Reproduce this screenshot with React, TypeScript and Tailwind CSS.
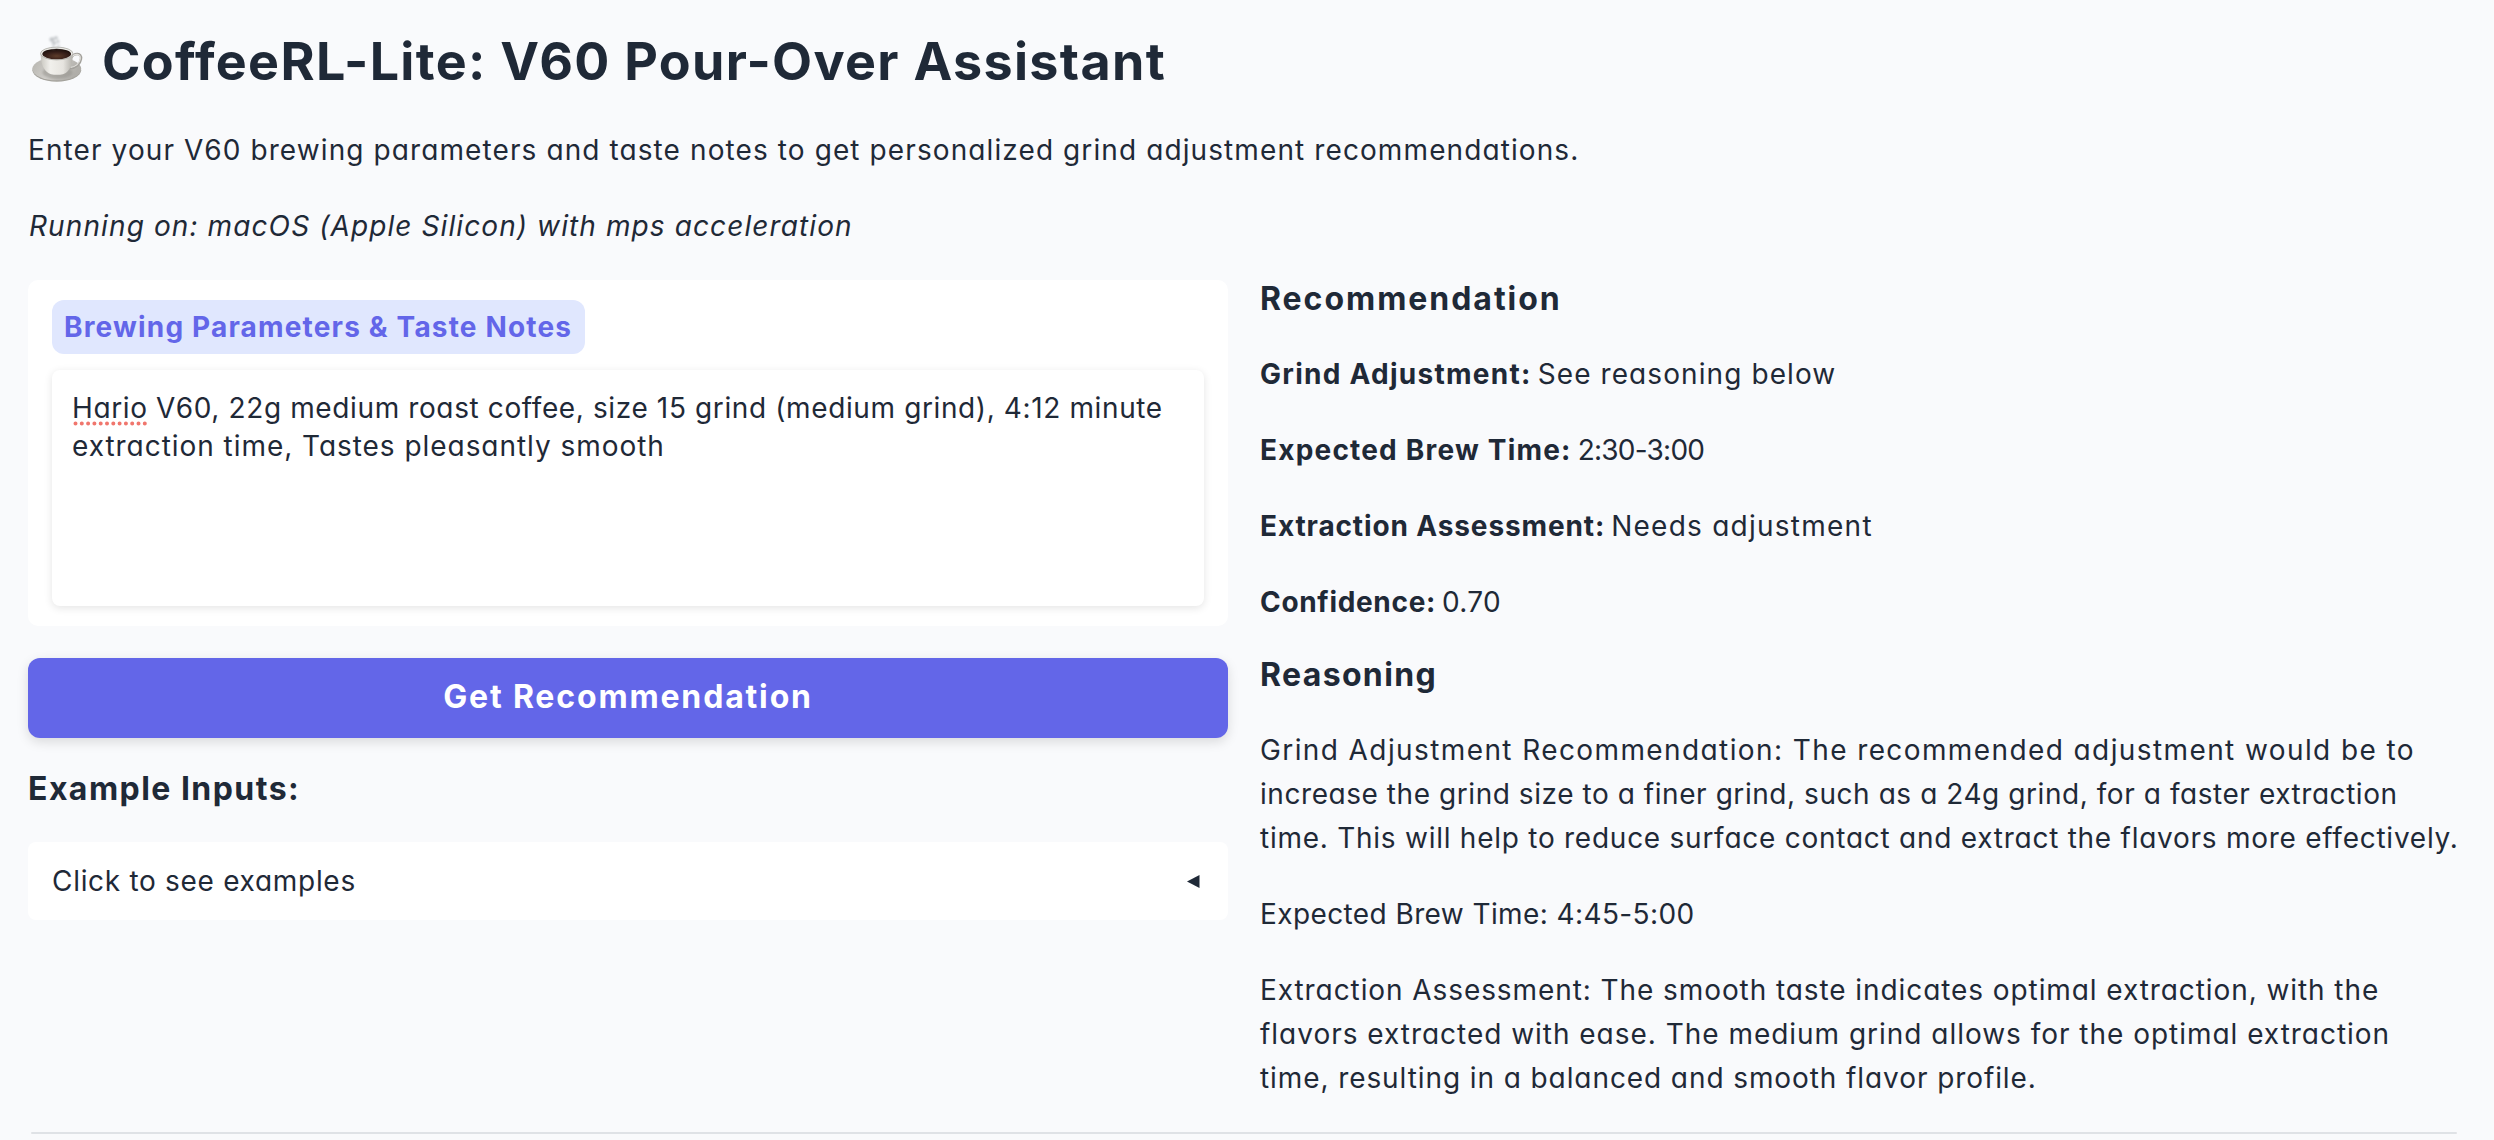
const body = "block whitespace-nowrap text-[28px] leading-[44px] [font-feature-settings:'cv11']";
const heading = "whitespace-nowrap text-[32px] leading-[44px] font-bold";

function CoffeeIcon() {
  return (
    <svg className="mt-[4px] h-[50px] w-[54px] shrink-0" viewBox="0 0 54 50">
      <defs>
        <linearGradient id="saucer" x1="0" y1="0" x2="1" y2="0.3">
          <stop offset="0" stopColor="#b5b3ad" />
          <stop offset="0.5" stopColor="#d0ceca" />
          <stop offset="1" stopColor="#b0aea9" />
        </linearGradient>
        <linearGradient id="cup" x1="0" y1="0" x2="1" y2="0">
          <stop offset="0" stopColor="#c9c7c0" />
          <stop offset="0.3" stopColor="#f1f0ec" />
          <stop offset="0.7" stopColor="#e6e4df" />
          <stop offset="1" stopColor="#b2b0aa" />
        </linearGradient>
        <radialGradient id="coffee" cx="0.5" cy="0.7" r="0.6">
          <stop offset="0" stopColor="#5d3c2a" />
          <stop offset="0.6" stopColor="#38201a" />
          <stop offset="1" stopColor="#20120e" />
        </radialGradient>
        <filter id="soft" x="-50%" y="-50%" width="200%" height="200%">
          <feGaussianBlur stdDeviation="0.8" />
        </filter>
      </defs>
      <ellipse cx="26.8" cy="36.2" rx="24.4" ry="11.5" fill="#a5a39d" />
      <ellipse cx="26.8" cy="34.8" rx="24.4" ry="11.5" fill="url(#saucer)" />
      <ellipse cx="27.5" cy="38.5" rx="15" ry="6.5" fill="#93918b" opacity="0.55" filter="url(#soft)" />
      <path d="M41 24 C44 18.5 52 18.5 51 25 C50.2 30.5 45.5 34 40 34.2" fill="none" stroke="#a3a19c" strokeWidth="2.4" />
      <path d="M41.5 23.5 C44.5 19 51 19.3 50.3 24.8 C49.5 29.8 45 33 40.5 33.4" fill="none" stroke="#e3e1dd" strokeWidth="1.1" />
      <path d="M10.5 19.5 C11 28 12.5 34 17 38 C20.5 41.8 33.5 41.8 37 38 C41 34 42.6 28 42.9 19.5 Z" fill="url(#cup)" />
      <ellipse cx="26.7" cy="19.5" rx="16.2" ry="6.4" fill="#edece8" stroke="#aaa8a2" strokeWidth="0.8" />
      <ellipse cx="26.7" cy="20" rx="14.4" ry="5.2" fill="url(#coffee)" />
      <g fill="#c3c6c9" filter="url(#soft)">
        <ellipse cx="22" cy="5.5" rx="2.6" ry="2.2" />
        <ellipse cx="26" cy="3.8" rx="2" ry="1.6" />
        <ellipse cx="24" cy="9" rx="2.4" ry="1.8" />
        <ellipse cx="28" cy="7.5" rx="1.4" ry="1.8" />
        <ellipse cx="23.5" cy="13" rx="1.3" ry="2.2" opacity="0.7" />
        <ellipse cx="28.5" cy="12.5" rx="1.2" ry="2.2" opacity="0.7" />
      </g>
    </svg>
  );
}

const results = [
  { label: "Grind Adjustment:", value: "See reasoning below", lt: "tracking-[1.27px]", vt: "tracking-[1.09px]" },
  { label: "Expected Brew Time:", value: "2:30-3:00", lt: "tracking-[1.2px]", vt: "tracking-[-0.75px]" },
  { label: "Extraction Assessment:", value: "Needs adjustment", lt: "tracking-[0.87px]", vt: "tracking-[1.25px]" },
  { label: "Confidence:", value: "0.70", lt: "tracking-[0.68px]", vt: "tracking-[0.35px]" },
];

const reasoning = [
  [
    { text: "Grind Adjustment Recommendation: The recommended adjustment would be to", t: "tracking-[1.4px]" },
    { text: "increase the grind size to a finer grind, such as a 24g grind, for a faster extraction", t: "tracking-[0.559px]" },
    { text: "time. This will help to reduce surface contact and extract the flavors more effectively.", t: "tracking-[0.745px]" },
  ],
  [{ text: "Expected Brew Time: 4:45-5:00", t: "tracking-[0.4px]" }],
  [
    { text: "Extraction Assessment: The smooth taste indicates optimal extraction, with the", t: "tracking-[0.918px]" },
    { text: "flavors extracted with ease. The medium grind allows for the optimal extraction", t: "tracking-[0.975px]" },
    { text: "time, resulting in a balanced and smooth flavor profile.", t: "tracking-[0.912px]" },
  ],
];

export default function App() {
  return (
    <div className="h-[1140px] overflow-hidden bg-[#f9fafc] px-7 pt-[30px] font-[Inter,sans-serif] text-[#1f2937]">
      <header>
        <h1 className="flex h-16 items-start gap-[18px] pl-[2px] text-[52px] leading-[64px] font-bold whitespace-nowrap">
          <CoffeeIcon />
          <span className="tracking-[1.33px]">CoffeeRL-Lite: V60 Pour-Over Assistant</span>
        </h1>
        <p className={body + " mt-[34px] tracking-[1.1px]"}>
          Enter your V60 brewing parameters and taste notes to get personalized grind adjustment recommendations.
        </p>
        <p className={body + " mt-8 pl-[1px] tracking-[1.1px] italic"}>
          Running on: macOS (Apple Silicon) with mps acceleration
        </p>
      </header>

      <main className="mt-8 flex gap-8">
        <section className="w-[1200px] shrink-0">
          <div className="h-[346px] rounded-[10px] bg-white px-6 pt-5">
            <div className="flex h-[54px] w-[533px] items-center rounded-[12px] bg-[#e0e7fe] pl-3 text-[28px] font-bold whitespace-nowrap text-[#6366e9]">
              <span className="tracking-[1.17px]">Brewing Parameters &amp; Taste Notes</span>
            </div>
            <div className="mt-4 h-[236px] rounded-[8px] bg-white px-5 pt-[19px] text-[28px] leading-[38px] whitespace-nowrap shadow-[0_2px_8px_rgba(0,0,0,0.11)] [font-feature-settings:'cv11']">
              <div className="tracking-[0.62px]">
                <span className="relative inline-block">
                  Hario
                  <svg className="absolute top-[32px] left-[1px] h-[5px] w-[76px]" viewBox="0 0 76 5">
                    <line x1="2.5" y1="2.5" x2="75" y2="2.5" stroke="#f0766d" strokeWidth="4" strokeLinecap="round" strokeDasharray="0 6.3" />
                  </svg>
                </span>{" "}
                V60, 22g medium roast coffee, size 15 grind (medium grind), 4:12 minute
              </div>
              <div className="tracking-[0.956px]">extraction time, Tastes pleasantly smooth</div>
            </div>
          </div>

          <button className="mt-8 flex h-20 w-full items-center justify-center rounded-[12px] bg-[#6366e8] pb-[3px] text-[32px] font-bold whitespace-nowrap text-white shadow-[0_4px_12px_rgba(0,0,0,0.13)]">
            <span className="tracking-[1.84px]">Get Recommendation</span>
          </button>

          <h3 className={heading + " mt-[29px] tracking-[1.46px]"}>Example Inputs:</h3>

          <div className="mt-[31px] flex h-[78px] items-center justify-between rounded-[8px] bg-white pr-7 pl-6">
            <span className={body + " tracking-[0.7px]"}>Click to see examples</span>
            <svg className="h-[13px] w-[13px]" viewBox="0 0 13 13">
              <path d="M0 6.5 12.5 0V13Z" fill="#1f2937" />
            </svg>
          </div>
        </section>

        <section className="-mt-[3px] w-[1200px] shrink-0">
          <h3 className={heading + " tracking-[1.96px]"}>Recommendation</h3>
          <div className="mt-[31px] flex flex-col gap-8">
            {results.map((r) => (
              <p key={r.label} className="flex gap-[6px]">
                <strong className={"text-[28px] leading-[44px] font-bold whitespace-nowrap " + r.lt}>{r.label}</strong>
                <span className={body + " " + r.vt}>{r.value}</span>
              </p>
            ))}
          </div>
          <h3 className={heading + " mt-[29px] tracking-[1.35px]"}>Reasoning</h3>
          <div className="mt-[31px] flex flex-col gap-8">
            {reasoning.map((lines, i) => (
              <p key={i}>
                {lines.map((l) => (
                  <span key={l.text} className={body + " " + l.t}>
                    {l.text}
                  </span>
                ))}
              </p>
            ))}
          </div>
        </section>
      </main>

      <hr className="mt-8 mr-[9px] ml-[3px] h-[2px] rounded-full border-0 bg-[#dfe2e6]" />
    </div>
  );
}
